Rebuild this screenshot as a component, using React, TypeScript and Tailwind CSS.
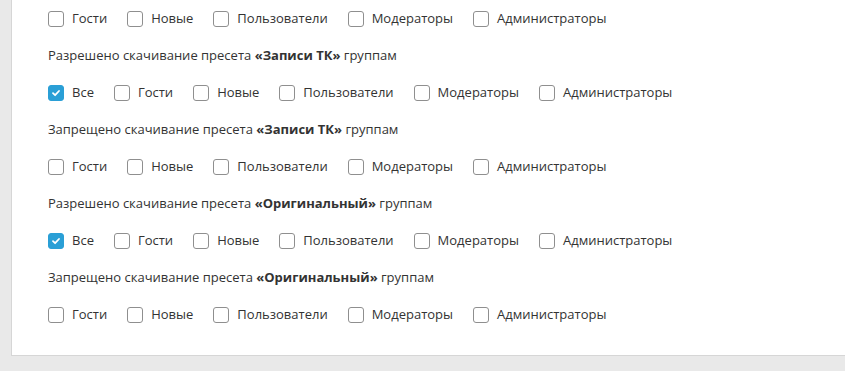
import React from "react";

const groupsAll = ["Все", "Гости", "Новые", "Пользователи", "Модераторы", "Администраторы"];
const groupsNoAll = ["Гости", "Новые", "Пользователи", "Модераторы", "Администраторы"];

function Check({ label, checked }: { label: string; checked?: boolean }) {
  return (
    <label className="flex items-center gap-2 mr-5">
      {checked ? (
        <span className="w-4 h-4 rounded-[3px] bg-[#2a9fd6] border border-[#2a9fd6] flex items-center justify-center">
          <svg width="10" height="10" viewBox="0 0 10 10" fill="none">
            <path d="M2 5.2 L4.1 7.2 L8 3" stroke="white" strokeWidth="1.8" strokeLinecap="round" strokeLinejoin="round" />
          </svg>
        </span>
      ) : (
        <span className="w-4 h-4 rounded-[3px] bg-white border border-[#8f8f8f]" />
      )}
      <span>{label}</span>
    </label>
  );
}

function Row({ items, allChecked }: { items: string[]; allChecked?: boolean }) {
  return (
    <div className="h-[37px] flex items-center">
      {items.map((g) => (
        <Check key={g} label={g} checked={allChecked && g === "Все"} />
      ))}
    </div>
  );
}

function Title({ kind, preset }: { kind: string; preset: string }) {
  return (
    <div className="h-[37px] flex items-center">
      <span>
        {kind} скачивание пресета <b className="font-bold">«{preset}»</b> группам
      </span>
    </div>
  );
}

export default function App() {
  return (
    <div className="w-[845px] h-[371px] bg-[#e9e9e9] overflow-hidden" style={{ fontFamily: '"Open Sans", "Noto Sans", sans-serif' }}>
      <div className="ml-[11px] bg-white border-l border-b border-[#d6d6d6] pl-[36px] pb-[22px] text-[13px] text-[#333333]">
        <Row items={groupsNoAll} />
        <Title kind="Разрешено" preset="Записи ТК" />
        <Row items={groupsAll} allChecked />
        <Title kind="Запрещено" preset="Записи ТК" />
        <Row items={groupsNoAll} />
        <Title kind="Разрешено" preset="Оригинальный" />
        <Row items={groupsAll} allChecked />
        <Title kind="Запрещено" preset="Оригинальный" />
        <Row items={groupsNoAll} />
      </div>
    </div>
  );
}
